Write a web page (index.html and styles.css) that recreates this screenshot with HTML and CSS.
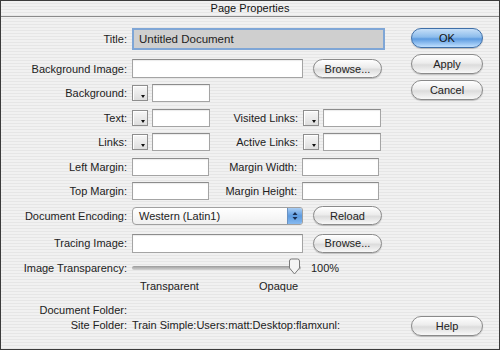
FILE: index.html
```html
<!DOCTYPE html>
<html lang="en">
<head>
    <meta charset="UTF-8">
    <meta name="viewport" content="width=device-width, initial-scale=1.0">
    <title>Page Properties</title>
    <link rel="stylesheet" href="styles.css">
</head>
<body>
    <div class="window">
        <div class="titlebar">Page Properties</div>
        <div class="content">
            <form class="form">
                <div class="row title-row">
                    <label class="lbl" for="title">Title:</label>
                    <input class="field title-field" type="text" id="title" value="Untitled Document">
                </div>

                <div class="row loose">
                    <label class="lbl" for="bgimage">Background Image:</label>
                    <input class="field wide" type="text" id="bgimage">
                    <button type="button" class="pill small">Browse...</button>
                </div>

                <div class="row">
                    <label class="lbl">Background:</label>
                    <span class="swatch"></span>
                    <input class="field short" type="text">
                </div>

                <div class="row">
                    <label class="lbl">Text:</label>
                    <span class="swatch"></span>
                    <input class="field short" type="text">
                    <label class="lbl2">Visited Links:</label>
                    <span class="swatch"></span>
                    <input class="field short" type="text">
                </div>

                <div class="row">
                    <label class="lbl">Links:</label>
                    <span class="swatch"></span>
                    <input class="field short" type="text">
                    <label class="lbl2">Active Links:</label>
                    <span class="swatch"></span>
                    <input class="field short" type="text">
                </div>

                <div class="row">
                    <label class="lbl">Left Margin:</label>
                    <input class="field margin" type="text">
                    <label class="lbl2">Margin Width:</label>
                    <input class="field margin" type="text">
                </div>

                <div class="row">
                    <label class="lbl">Top Margin:</label>
                    <input class="field margin" type="text">
                    <label class="lbl2">Margin Height:</label>
                    <input class="field margin" type="text">
                </div>

                <div class="row">
                    <label class="lbl">Document Encoding:</label>
                    <div class="select">
                        <span>Western (Latin1)</span>
                        <span class="stepper">
                            <svg width="6" height="10" viewBox="0 0 6 10"><path d="M3 1 L5.5 4 H0.5 Z M3 9 L5.5 6 H0.5 Z" fill="#1b2f52"/></svg>
                        </span>
                    </div>
                    <button type="button" class="pill small">Reload</button>
                </div>

                <div class="row loose">
                    <label class="lbl">Tracing Image:</label>
                    <input class="field wide" type="text">
                    <button type="button" class="pill small">Browse...</button>
                </div>

                <div class="row">
                    <label class="lbl">Image Transparency:</label>
                    <div class="slider">
                        <span class="track"></span>
                        <svg class="thumb" width="13" height="17" viewBox="0 0 13 17">
                            <path d="M1.5 3 Q1.5 1 3.5 1 H9.5 Q11.5 1 11.5 3 V10 L6.5 16 L1.5 10 Z" fill="#f4f4f4" stroke="#7a7a7a"/>
                        </svg>
                    </div>
                    <span class="percent">100%</span>
                </div>

                <div class="row ticks">
                    <span class="tick-left">Transparent</span>
                    <span>Opaque</span>
                </div>

                <div class="folders">
                    <div class="row info">
                        <span class="lbl">Document Folder:</span>
                    </div>
                    <div class="row info">
                        <span class="lbl">Site Folder:</span>
                        <span>Train Simple:Users:matt:Desktop:flamxunl:</span>
                    </div>
                </div>
            </form>

            <div class="buttons">
                <button type="button" class="pill default">OK</button>
                <button type="button" class="pill">Apply</button>
                <button type="button" class="pill">Cancel</button>
                <button type="button" class="pill help">Help</button>
            </div>
        </div>
    </div>
</body>
</html>
```

FILE: styles.css
```css
* {
    box-sizing: border-box;
}
body {
    margin: 0;
    font-family: "Liberation Sans", Arial, sans-serif;
    font-size: 11px;
    color: #222;
}
.window {
    width: 500px;
    height: 350px;
    border: 1px solid #3c3c3c;
    display: flex;
    flex-direction: column;
    background: repeating-linear-gradient(#f1f1f1 0 2px, #e6e6e6 2px 3px);
}
.titlebar {
    height: 16px;
    line-height: 15px;
    text-align: center;
    border-bottom: 1px solid #8a8a8a;
    color: #111;
}
.content {
    flex: 1;
    display: flex;
    padding: 11px 16px 13px 9px;
}
.form {
    flex: 1;
    display: flex;
    flex-direction: column;
    gap: 6.5px;
}
.row {
    display: flex;
    align-items: center;
    height: 18px;
}
.title-row {
    height: 22px;
}
.loose {
    margin-top: 3px;
}
.lbl {
    width: 117px;
    margin-right: 5px;
    text-align: right;
    white-space: nowrap;
}
.lbl2 {
    width: 88px;
    margin-right: 5px;
    text-align: right;
    white-space: nowrap;
}
.field {
    height: 18px;
    border: 1px solid #a4a4a4;
    border-top-color: #8c8c8c;
    background: #fff;
    font: inherit;
    color: #222;
    padding: 0 4px;
    margin: 0;
    box-shadow: inset 0 1px 1px rgba(0, 0, 0, 0.08);
}
.title-field {
    width: 253px;
    height: 22px;
    border: 2px solid #7fa6d6;
    background: #cfcfcf;
    font-size: 11.5px;
    padding: 0 5px;
    box-shadow: none;
}
.wide {
    width: 171px;
    height: 19px;
}
.short {
    width: 58px;
}
.margin {
    width: 77px;
}
.swatch {
    position: relative;
    width: 16px;
    height: 16px;
    margin-right: 4px;
    border: 1px solid #8e8e8e;
    background: linear-gradient(#f7f7f7, #dedede);
    box-shadow: inset 1px 1px 0 #fff;
}
.swatch::after {
    content: "";
    position: absolute;
    right: 2px;
    bottom: 2px;
    border-left: 2px solid transparent;
    border-right: 2px solid transparent;
    border-top: 3px solid #111;
}
.select {
    width: 171px;
    height: 18px;
    display: flex;
    align-items: center;
    justify-content: space-between;
    border: 1px solid #a0a0a0;
    border-radius: 4px 3px 3px 4px;
    background: linear-gradient(#ffffff, #f0f0f0);
    padding-left: 6px;
    overflow: hidden;
}
.stepper {
    width: 15px;
    height: 100%;
    display: flex;
    align-items: center;
    justify-content: center;
    background: linear-gradient(#a9cdf3, #5d9be0 50%, #86b9ef);
    border-left: 1px solid #6a92c2;
}
.pill {
    width: 69px;
    height: 20px;
    margin: 0;
    border: 1px solid #8a8a8a;
    border-radius: 10px;
    background: linear-gradient(#ffffff 0%, #ececec 45%, #dcdcdc 55%, #f8f8f8 100%);
    box-shadow: 0 1px 1px rgba(0, 0, 0, 0.2);
    font: inherit;
    font-size: 11px;
    color: #222;
    padding: 0;
}
.small {
    height: 19px;
    margin-left: 10px;
}
.slider {
    position: relative;
    width: 169px;
    height: 18px;
    display: flex;
    align-items: center;
}
.track {
    width: 100%;
    height: 4px;
    border-radius: 2px;
    background: linear-gradient(#9a9a9a, #d4d4d4);
}
.thumb {
    position: absolute;
    right: 0;
    top: -1px;
}
.percent {
    margin-left: 10px;
}
.ticks {
    margin-top: -6.5px;
    padding-left: 130px;
}
.tick-left {
    width: 119px;
}
.folders {
    margin-top: 2px;
    display: flex;
    flex-direction: column;
    gap: 1px;
}
.info {
    height: 14px;
}
.buttons {
    width: 72px;
    display: flex;
    flex-direction: column;
    gap: 6px;
}
.buttons .pill {
    width: 72px;
}
.default {
    border-color: #3f6fa8;
    background: linear-gradient(#c6dff8 0%, #8cbcec 45%, #5d9be0 55%, #bfe0ff 100%);
    color: #111;
}
.help {
    margin-top: auto;
}
```
